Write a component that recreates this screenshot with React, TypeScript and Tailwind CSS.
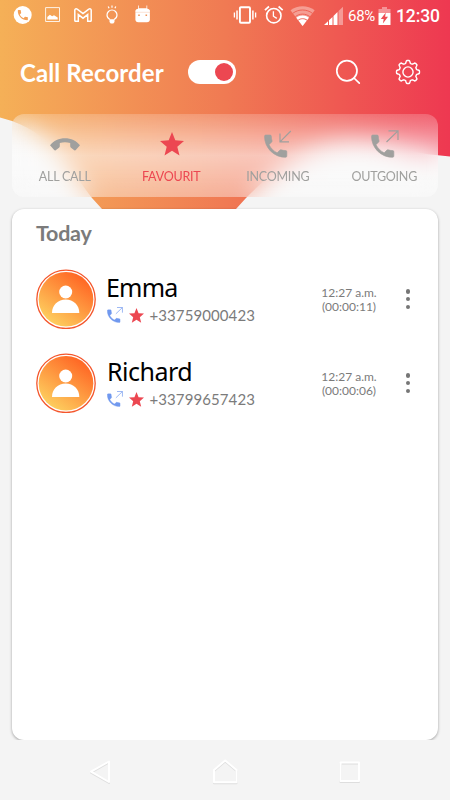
import React from 'react';

interface Call {
  id: number;
  name: string;
  phone: string;
  time: string;
  duration: string;
  nameClass: string;
}

const calls: Call[] = [
  { id: 1, name: 'Emma', phone: '+33759000423', time: '12:27 a.m.', duration: '(00:00:11)', nameClass: 'tracking-[-0.800px]' },
  { id: 2, name: 'Richard', phone: '+33799657423', time: '12:27 a.m.', duration: '(00:00:06)', nameClass: 'pl-px tracking-[-0.500px]' },
];

const PHONE_PATH =
  'M6.62 10.79c1.44 2.83 3.76 5.14 6.59 6.59l2.2-2.2c.27-.27.67-.36 1.02-.24 1.12.37 2.33.57 3.57.57.55 0 1 .45 1 1V20c0 .55-.45 1-1 1-9.39 0-17-7.61-17-17 0-.55.45-1 1-1h3.5c.55 0 1 .45 1 1 0 1.25.2 2.45.57 3.57.11.35.03.74-.25 1.02l-2.2 2.2z';

const StarIcon: React.FC<{ className?: string }> = ({ className }) => (
  <svg viewBox="0 0 24 24" className={className} fill="currentColor">
    <path d="M12 0l3.3 8.3 8.7.6-6.7 5.8 2.2 8.8-7.5-4.8-7.5 4.8 2.2-8.8L0 8.9l8.7-.6z" />
  </svg>
);

// Handset with a thin arrow in its upper right corner
const CallIcon: React.FC<{ direction: 'in' | 'out'; className?: string }> = ({ direction, className }) => (
  <svg viewBox="0 0 28 28" className={className} fill="currentColor">
    <g transform="translate(-3.200 1.300) scale(1.24)" stroke="currentColor" strokeWidth=".5" strokeLinejoin="round">
      <path d={PHONE_PATH} />
    </g>
    <path
      d={direction === 'in' ? 'M26.8 1L16 11.8M16 3.500v8.300h9' : 'M15.500 12L27 .9M17.500 .9H27v9'}
      fill="none"
      stroke="currentColor"
      strokeWidth="1.2"
    />
  </svg>
);

const HandsetIcon = () => (
  <svg viewBox="0 0 30 13" className="w-[30px] h-[13px]" fill="currentColor">
    <path d="M0 7.2C3.6 2.8 9 .2 15 .2s11.400 2.600 15 7l-4.200 4.900c-.5.500-1 .5-1.500.1l-3.300-2.400c-.5-.4-.8-.9-.8-1.500V4.900c-3.300-1-7.100-1-10.400 0v3.400c0 .6-.3 1.100-.8 1.500l-3.300 2.400c-.5.4-1 .4-1.500-.1z" />
  </svg>
);

const Notifications = () => (
  <div className="flex items-center pb-px">
    <svg viewBox="0 0 20 20" className="w-5 h-5">
      <circle cx="9.700" cy="10" r="9" fill="#fff" />
      <g transform="translate(3.100 3.400) scale(.56)">
        <path d={PHONE_PATH} fill="#f3a056" />
      </g>
    </svg>
    <svg viewBox="0 0 16 16" className="ml-3 w-4 h-4">
      <path d="M.6.6h13.900v13.900H.6z" fill="none" stroke="#fff" strokeOpacity=".85" />
      <path d="M2.300 12.500V10l2.600-2.300 2.200 1.600 1.900-1 3.700 2.200v2z" fill="#fff" />
    </svg>
    <svg viewBox="0 0 18 14" className="ml-[12.500px] w-[18px] h-[14px]">
      <path d="M.8 2.200C.8.900 2.200.4 3.200 1.200L9 5.600l5.800-4.400c1-.8 2.400-.3 2.400 1v10.300c0 .5-.3.800-.8.800h-2.700V6.600L9 10.200 4.300 6.600v6.700H1.600c-.5 0-.8-.3-.8-.8z" fill="none" stroke="#fff" strokeWidth="1.500" />
    </svg>
    <svg viewBox="0 0 14 20" className="ml-[13.500px] w-[14px] h-5">
      <path d="M4.900 14.500C3 13.500 2 11.700 2 10a5 5 0 0 1 10 0c0 1.700-1 3.500-2.900 4.500" fill="none" stroke="#fff" strokeWidth="1.200" />
      <path d="M4.500 14.300h5v2.700L8.300 18.500H5.700L4.500 17z" fill="#fff" />
      <path d="M7 .6v2.200M3.200 1.400l.9 1.900M10.800 1.400l-.9 1.900" stroke="#fff" strokeWidth="1.200" />
    </svg>
    <svg viewBox="0 0 16 18" className="ml-4 mb-[2px] w-4 h-[18px]">
      <path d="M3.500.5v4M11.800.5v4" stroke="#fff" strokeOpacity=".75" />
      <rect x=".4" y="4" width="14.500" height="13.300" rx="3" fill="#fff" />
      <path d="M.7 7V5l3-1.700h8l3 1.700v2z" fill="#fff" />
      <path d="M.4 7.300h14.500" stroke="#f0955a" strokeOpacity=".25" />
      <path d="M3.200 9.500h1.600v1.400H3.200zM10.500 9.500h1.600v1.400h-1.600z" fill="#f0955a" />
    </svg>
  </div>
);

const SystemStatus = () => (
  <div className="flex items-center text-white">
    <svg viewBox="0 0 24 18" className="mb-px w-6 h-[18px]" fill="none" stroke="#fff">
      <rect x="6.900" y="1.200" width="10.100" height="15.600" rx="1" strokeWidth="1.900" />
      <path d="M4 4.500v9M19.900 4.500v9" strokeWidth="1.500" />
      <path d="M1.400 6.500v5M22.600 6.500v5" strokeWidth="1.300" />
    </svg>
    <svg viewBox="0 0 20 20" className="ml-[7px] mb-px w-5 h-5" fill="none" stroke="#fff">
      <circle cx="9.800" cy="10.700" r="7.200" strokeWidth="1.600" />
      <path d="M9.400 6.300v4.900l3.400 2.200" strokeWidth="1.300" />
      <path d="M.9 5.200L5 1.500M18.700 5.200l-4.100-3.700" strokeWidth="1.700" />
    </svg>
    <svg viewBox="0 0 26 20" className="ml-[6px] w-[26px] h-5">
      <path d="M12.600 20L.5 4.300C7.500-1.100 17.700-1.100 24.700 4.300z" fill="#fff" fillOpacity=".38" />
      <path d="M12.600 20L6.300 11.800c3.700-2.900 8.900-2.900 12.600 0z" fill="#fff" />
      <path d="M2.800 7.300c5.700-4.400 13.900-4.400 19.600 0M5.400 10.600c4.200-3.300 10.200-3.300 14.400 0M8.200 14.200c2.600-2 6.200-2 8.800 0" fill="none" stroke="#ef6355" strokeWidth="1" />
    </svg>
    <svg viewBox="0 0 20 20" className="ml-2 w-5 h-5">
      <path d="M14.500 5L19 .8V19h-4.500z" fill="#fff" fillOpacity=".4" />
      <path d="M0 19L4 15.200V19zM5 14.300L8.500 11v8H5zM9.500 10L13.500 6.100V19h-4z" fill="#fff" />
    </svg>
    <span className="ml-[4px] w-[27px] font-[Roboto,sans-serif] text-[15px] leading-5 tracking-[-0.300px] whitespace-nowrap">68%</span>
    <svg viewBox="0 0 13 18" className="ml-[3px] w-[13px] h-[18px]">
      <path d="M4 0h5v2h3.500v4H.5V2H4z" fill="#fff" fillOpacity=".4" />
      <path d="M.5 6h12v12H.5z" fill="#fff" />
      <path d="M7.800 5.500L2.800 12h2.900L4.900 16.500 10 9.800H7.100z" fill="#ee4c53" />
    </svg>
    <span className="ml-[5px] w-[44px] font-[Roboto,sans-serif] text-[17.500px] leading-5 font-medium tracking-[-0.100px] whitespace-nowrap">12:30</span>
  </div>
);

// Gear outline with eight rounded teeth
const gearPoints = Array.from({ length: 96 }, (_, i) => {
  const a = (i / 96) * Math.PI * 2;
  const wave = Math.max(-1, Math.min(1, Math.cos(a * 8) * 1.8));
  const r = 9.400 + wave * 1.200;
  return `${(12 + r * Math.sin(a)).toFixed(2)},${(12 - r * Math.cos(a)).toFixed(2)}`;
}).join(' ');

const tabs = [
  { label: 'ALL CALL', icon: <HandsetIcon />, className: 'text-[#a0a09e]' },
  { label: 'FAVOURIT', icon: <StarIcon className="w-6 h-6" />, className: 'text-[#ec4751]' },
  { label: 'INCOMING', icon: <CallIcon direction="in" className="w-7 h-7" />, className: 'text-[#a0a09e]' },
  { label: 'OUTGOING', icon: <CallIcon direction="out" className="w-7 h-7" />, className: 'text-[#a0a09e]' },
];

const Backdrop = () => (
  <svg viewBox="0 0 450 240" className="absolute top-0 left-0 w-[450px] h-[240px]">
    <defs>
      <linearGradient id="warm" x1="0" y1="0" x2="1" y2="0">
        <stop offset="0" stopColor="#f5b057" />
        <stop offset=".5" stopColor="#f07a53" />
        <stop offset="1" stopColor="#ee3851" />
      </linearGradient>
    </defs>
    <path d="M0 0h450v156.500l-12-1.200C405 153 375 137 335 144 296 151 272 172 246 198l-10 11-4 4H106l-4-4-10-11C72 172 56 137 12 121L0 117.500z" fill="url(#warm)" />
  </svg>
);

const CallRow: React.FC<{ call: Call }> = ({ call }) => (
  <div className="flex h-[84px] pl-6 pr-[27px]">
    <svg viewBox="0 0 60 60" className="w-[60px] h-[60px] shrink-0">
      <defs>
        <linearGradient id={`avatar-${call.id}`} x1=".15" y1=".95" x2=".75" y2=".1">
          <stop offset="0" stopColor="#fdd462" />
          <stop offset="1" stopColor="#ff6a26" />
        </linearGradient>
      </defs>
      <circle cx="30" cy="30.300" r="29.200" fill="none" stroke="#f4562c" strokeWidth="1.300" />
      <circle cx="30" cy="30.300" r="27.300" fill={`url(#avatar-${call.id})`} />
      <circle cx="29.700" cy="23" r="6.500" fill="#fff" />
      <path d="M16 44c0-8 6-13.400 13.700-13.400s13.600 5.400 13.600 13.400z" fill="#fff" />
    </svg>
    <div className="ml-[10px] flex-1">
      <div className={`h-9 font-['Noto_Sans',sans-serif] text-[25px] leading-9 text-black ${call.nameClass}`}>{call.name}</div>
      <div className="flex h-5 items-center pl-px text-[15px] text-[#7b7b7b]">
        <CallIcon direction="out" className="w-4 h-4 text-[#7199ef]" />
        <StarIcon className="ml-[5.500px] w-[15px] h-[15px] text-[#ec4751]" />
        <span className="ml-[6px] tracking-[0.090px]">{call.phone}</span>
      </div>
    </div>
    <div className="mt-[17px] w-[60px] text-center text-[12px] leading-[14px] text-[#7b7b7b] whitespace-nowrap">
      <div>{call.time}</div>
      <div>{call.duration}</div>
    </div>
    <button className="ml-[26px] mt-5 flex h-5 w-[6px] flex-col items-center justify-between">
      <span className="h-[4.500px] w-[4.500px] rounded-full bg-[#767676]" />
      <span className="h-[4.500px] w-[4.500px] rounded-full bg-[#767676]" />
      <span className="h-[4.500px] w-[4.500px] rounded-full bg-[#767676]" />
    </button>
  </div>
);

const App: React.FC = () => {
  return (
    <div className="relative isolate h-[800px] w-[450px] overflow-hidden bg-[#f4f4f4] font-[Lato,sans-serif]">
      <Backdrop />
      <div className="relative flex h-full flex-col">
        <div className="flex h-[31px] items-center justify-between pl-[13px] pr-[10px]">
          <Notifications />
          <SystemStatus />
        </div>

        <header className="flex h-[83px] items-center pb-[1px] pl-5 pr-[29px] text-white">
          <h1 className="w-[168px] pt-[2px] text-[24px] font-bold tracking-[0.100px] whitespace-nowrap">Call Recorder</h1>
          <button className="flex h-6 w-12 items-center justify-end rounded-full bg-white pr-[3px]">
            <span className="h-[18px] w-[18px] rounded-full bg-[#ec4751]" />
          </button>
          <svg viewBox="0 0 26 26" className="ml-auto w-[26px] h-[26px]" fill="none" stroke="#fff" strokeWidth="1.700">
            <circle cx="11.900" cy="11.700" r="10.100" />
            <path d="M19 19l5.300 5.200" strokeLinecap="round" />
          </svg>
          <svg viewBox="0 0 24 24" className="ml-[34px] w-[26px] h-[26px]" fill="none" stroke="#fff" strokeWidth="1.300">
            <polygon points={gearPoints} strokeLinejoin="round" />
            <circle cx="12" cy="12" r="4.700" />
          </svg>
        </header>

        <nav className="mx-3 grid h-[83px] shrink-0 grid-cols-4 rounded-[12px] bg-linear-to-b from-white/20 via-white/60 via-50% to-white/40 backdrop-blur-[12px]">
          {tabs.map(tab => (
            <button key={tab.label} className={`flex flex-col items-center ${tab.className}`}>
              <span className="flex h-[53px] items-center justify-center pt-[7px]">{tab.icon}</span>
              <span className="pr-px text-[12.500px] leading-5 tracking-[-0.220px] whitespace-nowrap">{tab.label}</span>
            </button>
          ))}
        </nav>

        {/* the list card casts its shadow only down to the system bar */}
        <div className="-mx-px mt-[6px] h-[537px] shrink-0 overflow-hidden px-[13px] pt-[6px]">
          <main className="h-[531px] rounded-[12px] bg-white shadow-[0_1px_3px_rgba(0,0,0,0.35)]">
            <h2 className="h-[60px] pl-6 pt-[9px] text-[21.500px] leading-[30px] font-bold tracking-[-0.250px] text-[#7b7b7b]">Today</h2>
            {calls.map(call => (
              <CallRow key={call.id} call={call} />
            ))}
          </main>
        </div>

        <footer className="flex h-[60px] shrink-0 items-center justify-between pl-[87px] pr-[87px] pt-[4px]">
          <svg viewBox="0 0 26 26" className="w-[26px] h-[26px] drop-shadow-[0_1px_0.500px_rgba(0,0,0,0.09)]" fill="none" stroke="#fff" strokeWidth="2" strokeLinejoin="round">
            <path d="M22 2.500v20.500L4 12.700z" />
          </svg>
          <svg viewBox="0 0 26 26" className="w-[26px] h-[26px] drop-shadow-[0_1px_0.500px_rgba(0,0,0,0.09)]" fill="none" stroke="#fff" strokeWidth="2" strokeLinejoin="round">
            <path d="M2 11L13.200 1.500 24.500 11v12.200H2z" />
          </svg>
          <svg viewBox="0 0 26 26" className="w-[26px] h-[26px] drop-shadow-[0_1px_0.500px_rgba(0,0,0,0.09)]" fill="none" stroke="#fff" strokeWidth="2" strokeLinejoin="round">
            <path d="M3.500 3.500h18.500v18.500H3.500z" />
          </svg>
        </footer>
      </div>
    </div>
  );
};

export default App;
